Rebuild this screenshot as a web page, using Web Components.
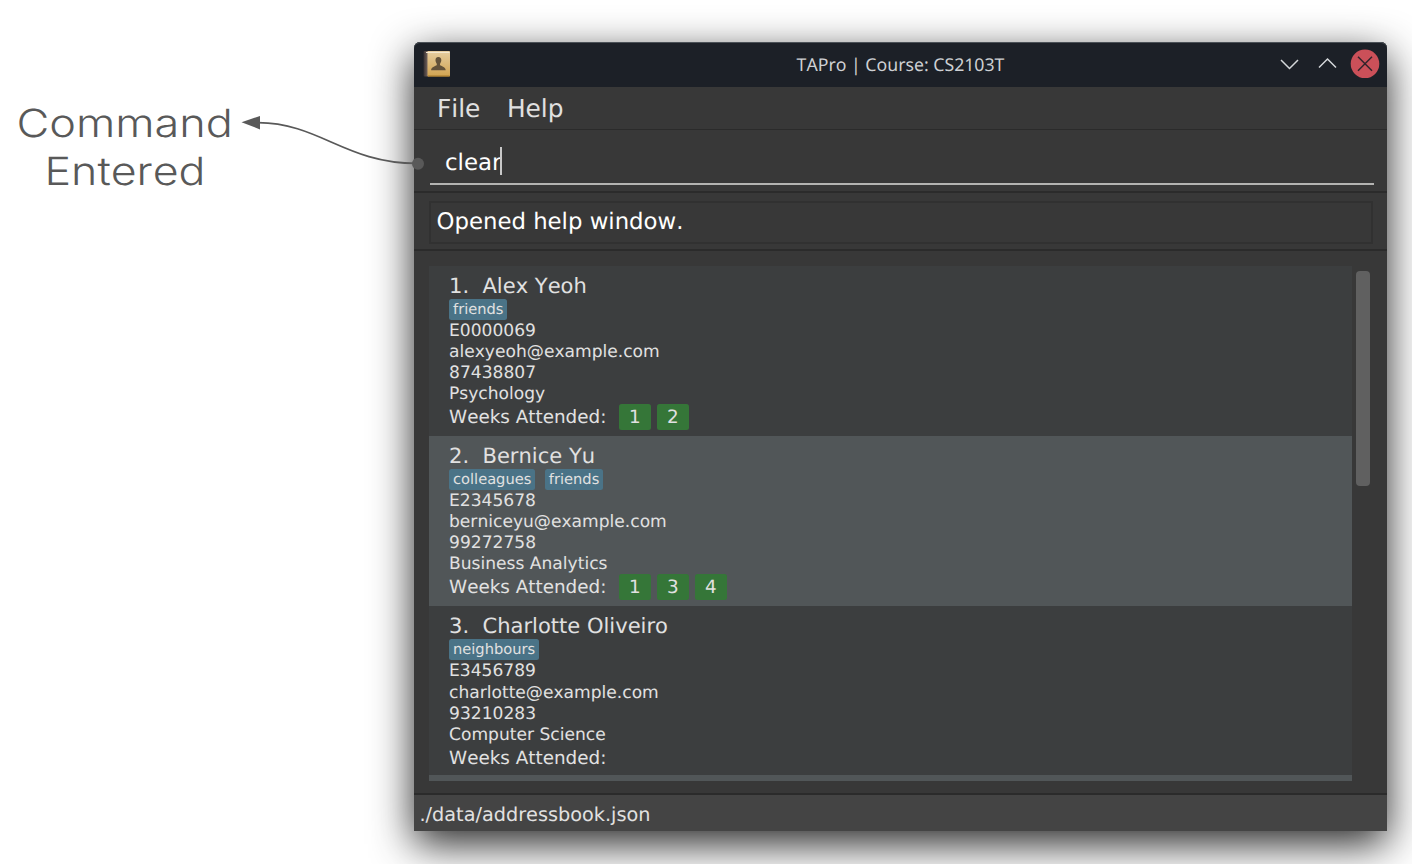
<!DOCTYPE html>
<html lang="en">
<head>
<meta charset="utf-8">
<title>TAPro</title>
<style>
html,body{margin:0;height:100%;overflow:hidden;background:#fff}
body{font-family:"DejaVu Sans",sans-serif;text-rendering:geometricPrecision;font-kerning:none}
</style>
</head>
<body>
<tapro-figure></tapro-figure>
<script>
const define = (name, html) => customElements.define(name, class extends HTMLElement {
  constructor() {
    super();
    this.attachShadow({mode: 'open'});
  }
  connectedCallback() {
    this.shadowRoot.innerHTML = typeof html === 'function' ? html(this) : html;
  }
});

define('callout-note', `
<style>
:host{display:block;width:414px;flex:none;position:relative;z-index:2;padding-top:99px;box-sizing:border-box}
svg{display:block;overflow:visible}
text{font-family:Inter,sans-serif;font-weight:300;font-size:38.8px;fill:#595959}
</style>
<svg width="430" height="100" viewBox="0 99 430 100">
<text x="16.5" y="137" textLength="216.500" lengthAdjust="spacingAndGlyphs">Command</text>
<text x="44.5" y="185" textLength="161" lengthAdjust="spacingAndGlyphs">Entered</text>
<path d="M258 122.7C320 123 345 163.3 417 163.4" fill="none" stroke="#595959" stroke-width="1.7"/>
<path d="M241.5 122.3L260 116V129.4Z" fill="#595959"/>
<circle cx="418" cy="163.7" r="6" fill="#595959"/>
</svg>`);

define('title-bar', `
<style>
:host{display:grid;grid-template-columns:1fr auto 1fr;align-items:center;height:45.5px;background:#1c2027;color:#ced0d3;
font:17.700px "Noto Sans",sans-serif;font-kerning:none;border-radius:6px 6px 0 0;box-shadow:inset 0 1px #4b5157}
.book{margin-left:9px;display:block}
.title{padding-top:2px;white-space:nowrap}
.btns{justify-self:end;display:block}
</style>
<svg class="book" width="28" height="27" viewBox="0 0 28 27">
<defs><linearGradient id="g" x2="0" y2="1"><stop stop-color="#e5cda0"/><stop offset="1" stop-color="#d2a451"/></linearGradient>
<linearGradient id="s"><stop stop-color="#352f31"/><stop offset="1" stop-color="#8f7b71"/></linearGradient></defs>
<rect x=".5" y="0" width="6" height="25.500" rx="1" fill="url(#s)"/>
<rect x="4.5" y="0" width="22.5" height="25.500" rx=".8" fill="url(#g)"/>
<path d="M3 1.500H26.5" stroke="#f4e8d0"/><path d="M5 25H26.5" stroke="#a57928"/>
<path d="M15.300 6c-2 0-2.900 1.500-2.800 3.500.1 1.400.8 2.500 1.300 3.300v1.500c-2 1-5.500 1.700-5.700 4.900h14.600c-.2-3.200-3.700-3.900-5.700-4.900v-1.500c.5-.8 1.200-1.900 1.300-3.300.1-2-.8-3.500-3-3.500z" fill="#63523a"/>
</svg>
<div class="title"><slot></slot></div>
<svg class="btns" width="110" height="32" viewBox="0 0 110 32">
<path d="M4 12l8.500 8.500L21 12M42 19.500L50.500 11 59 19.500" fill="none" stroke="#d4d7da" stroke-width="1.500"/>
<circle cx="88" cy="15.800" r="14.300" fill="#cb5059"/>
<path d="M81 8.800l14 14M95 8.800l-14 14" stroke="#33242b" stroke-width="1.500"/>
</svg>`);

define('menu-bar', `
<style>
:host{display:flex;gap:26.500px;height:42.500px;align-items:center;padding:2px 0 0 23px;font-size:24.850px;color:#e0e0e0;border-bottom:1px solid #2b2b2b;box-sizing:border-box}
</style><slot></slot>`);

define('command-box', `
<style>
:host{display:block;height:63px;box-sizing:border-box;padding:13px 13.500px 0 16px;border-bottom:2px solid #2b2b2b}
.field{height:42px;box-sizing:border-box;border-bottom:2px solid #b4b4b2;display:flex;align-items:center;padding:0 0 0 15px;font-size:22.9px;color:#fff}
i{width:1.500px;height:28px;background:#c8c8c8;margin:-3px 0 0 -1px}
</style>
<div class="field"><span><slot></slot></span><i></i></div>`);

define('result-display', `
<style>
:host{display:block;height:58.500px;box-sizing:border-box;padding:8px 14px 0 15px;border-bottom:2px solid #2b2b2b}
div{height:43px;box-sizing:border-box;border:2px solid #313131;padding-left:5.500px;line-height:38px;font-size:22.800px;color:#fff}
</style>
<div><slot></slot></div>`);

define('student-card', el => {
  const chips = (attr, cls) => (el.getAttribute(attr) || '').split(' ').filter(Boolean).map(t => `<b class="${cls}">${t}</b>`).join('');
  const [id, mail, phone, major] = el.getAttribute('details').split('|');
  return `
<style>
:host{display:block;height:170.400px;flex:none;box-sizing:border-box;padding:7px 0 0 20px;color:#e1e1e1;background:var(--row);font-size:17.100px}
.name{font-size:21.050px;line-height:26px;height:26px;white-space:pre}
.tags{display:flex;gap:9.500px;height:21px}
b{font-weight:400}
.tag{background:#4a7387;border-radius:2.500px;font-size:14.650px;line-height:21px;padding:0 4px}
.line{height:21.100px;line-height:22.600px}
.weeks{display:flex;align-items:center;height:26px;font-size:18.350px}
.weeks span{margin-right:12.500px;padding-top:1px}
.week{width:32px;height:26px;line-height:27px;border-radius:2.500px;background:#357638;text-align:center;margin-right:6px}
</style>
<div class="name"><slot></slot></div>
<div class="tags">${chips('tags', 'tag')}</div>
<div class="line">${id}</div><div class="line">${mail}</div><div class="line">${phone}</div><div class="line">${major}</div>
<div class="weeks"><span>Weeks Attended:</span>${chips('weeks', 'week')}</div>`;
});

define('student-list', `
<style>
:host{display:flex;flex:1;min-height:0;box-sizing:border-box;padding:14.700px 17px 12.500px 15px;border-bottom:2px solid #2b2b2b}
.rows{width:923px;display:flex;flex-direction:column;overflow:hidden}
.bar{width:14px;height:215px;border-radius:4px;background:#606060;margin:5.500px 0 0 4px}
</style>
<div class="rows"><slot></slot></div><div class="bar"></div>`);

define('status-bar', `
<style>:host{display:block;height:35.500px;line-height:39px;background:#444;color:#e1e1e1;font-size:19.250px;padding-left:5.500px}</style><slot></slot>`);

define('app-window', `
<style>
:host{display:flex;flex-direction:column;width:973px;height:789px;margin-top:41.500px;background:#383838;border-radius:6px 6px 0 0;box-shadow:0 13px 42px rgba(0,0,0,.85)}
</style><slot></slot>`);

define('tapro-figure', `
<style>
:host{display:flex;align-items:flex-start;width:1412px;height:864px;overflow:hidden}
.a{--row:#3c3e3f}.b{--row:#515658}
.short{height:168.500px}
.next{flex:none;height:20px;background:#515658}
</style>
<callout-note></callout-note>
<app-window>
<title-bar>TAPro | Course: CS2103T</title-bar>
<menu-bar><span>File</span><span>Help</span></menu-bar>
<command-box>clear</command-box>
<result-display>Opened help window.</result-display>
<student-list>
<student-card class="a" tags="friends" weeks="1 2" details="E0000069|alexyeoh@example.com|87438807|Psychology">1.  Alex Yeoh</student-card>
<student-card class="b" tags="colleagues friends" weeks="1 3 4" details="E2345678|berniceyu@example.com|99272758|Business Analytics">2.  Bernice Yu</student-card>
<student-card class="a short" tags="neighbours" details="E3456789|charlotte@example.com|93210283|Computer Science">3.  Charlotte Oliveiro</student-card>
<div class="next"></div>
</student-list>
<status-bar>./data/addressbook.json</status-bar>
</app-window>`);
</script>
</body>
</html>
